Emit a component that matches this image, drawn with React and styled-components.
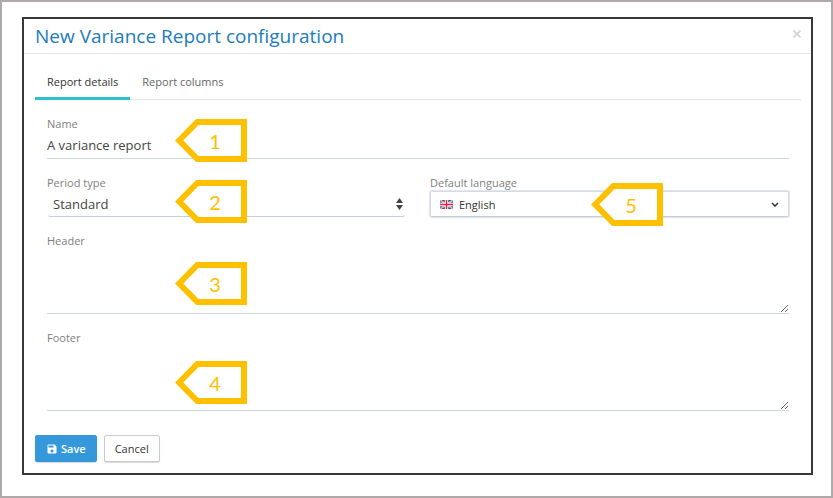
import React from 'react'
import styled, { createGlobalStyle } from 'styled-components'
import { MdSave } from 'react-icons/md'

function Callout({ number, left, top }) {
  return (
    <StyledCallout $left={left} $top={top}>
      <svg width="72" height="43" viewBox="0 0 72 43">
        <path d="M4.2 21.5 L22.3 3 H69 V40 H22.3 Z" fill="#fff" stroke="#ffc000" strokeWidth="6" />
      </svg>
      <StyledNumber>{number}</StyledNumber>
    </StyledCallout>
  )
}

function Flag() {
  return (
    <StyledFlag width="13" height="9" viewBox="0 0 26 18">
      <rect width="26" height="18" fill="#3a4a94" />
      <path d="M0 0 L26 18 M26 0 L0 18" stroke="#e9e3ef" strokeWidth="3" />
      <path d="M0 0 L26 18 M26 0 L0 18" stroke="#dc4a58" strokeWidth="1" />
      <path d="M13 0 V18 M0 9 H26" stroke="#fff" strokeWidth="7" />
      <path d="M13 0 V18 M0 9 H26" stroke="#d8283c" strokeWidth="3" />
    </StyledFlag>
  )
}

function App() {
  return (
    <>
      <GlobalStyle />
      <StyledPage>
        <StyledDialog role="dialog" aria-labelledby="title">
          <StyledHeader>
            <StyledTitle id="title">New Variance Report configuration</StyledTitle>
            <StyledClose type="button" aria-label="Close">
              <svg width="8" height="8" viewBox="0 0 8 8">
                <path d="M0.5 0.5 L7.5 7.5 M7.5 0.5 L0.5 7.5" stroke="#d2d2d2" strokeWidth="1.6" />
              </svg>
            </StyledClose>
          </StyledHeader>
          <StyledBody>
            <StyledTabs role="tablist">
              <StyledTab type="button" role="tab" aria-selected="true" $active>Report details</StyledTab>
              <StyledTab type="button" role="tab" aria-selected="false">Report columns</StyledTab>
            </StyledTabs>
            <StyledForm id="report" onSubmit={(e) => e.preventDefault()}>
              <StyledField>
                <StyledLabel htmlFor="name">Name</StyledLabel>
                <StyledInput id="name" defaultValue="A variance report" />
                <Callout number={1} left={128} top={3} />
              </StyledField>
              <StyledRow>
                <StyledField>
                  <StyledLabel htmlFor="period">Period type</StyledLabel>
                  <StyledControl>
                    <StyledSelect id="period">
                      <option>Standard</option>
                    </StyledSelect>
                    <StyledArrow width="7" height="12" viewBox="0 0 7 12" $right={3}>
                      <path d="M3.5 0 L7 5 H0 Z M0 7 H7 L3.5 12 Z" fill="#444" />
                    </StyledArrow>
                  </StyledControl>
                  <Callout number={2} left={128} top={5} />
                </StyledField>
                <StyledField>
                  <StyledLabel htmlFor="language">Default language</StyledLabel>
                  <StyledControl>
                    <StyledSelect id="language" $boxed>
                      <option>English</option>
                    </StyledSelect>
                    <Flag />
                    <StyledArrow width="8" height="5" viewBox="0 0 8 5" $right={10}>
                      <path d="M1 1 L4 4 L7 1" fill="none" stroke="#333" strokeWidth="1.5" />
                    </StyledArrow>
                  </StyledControl>
                  <Callout number={5} left={161} top={8} />
                </StyledField>
              </StyledRow>
              <StyledField>
                <StyledLabel htmlFor="header">Header</StyledLabel>
                <StyledTextarea id="header" />
                <Callout number={3} left={128} top={29} />
              </StyledField>
              <StyledField>
                <StyledLabel htmlFor="footer">Footer</StyledLabel>
                <StyledTextarea id="footer" />
                <Callout number={4} left={128} top={31} />
              </StyledField>
            </StyledForm>
            <StyledActions>
              <StyledButton type="submit" form="report" $primary>
                <MdSave size={12} />
                Save
              </StyledButton>
              <StyledButton type="button">Cancel</StyledButton>
            </StyledActions>
          </StyledBody>
        </StyledDialog>
      </StyledPage>
    </>
  )
}

const GlobalStyle = createGlobalStyle`
  * {
    box-sizing: border-box;
  }
  body {
    margin: 0;
    background: #fff;
  }
  body, button, input, select, textarea {
    font-family: "Open Sans", "Noto Sans", sans-serif;
  }
`;

const StyledPage = styled.main`
  min-height: 100vh;
  padding: 15px 18px 20px 20px;
  border: 2px solid #aeaaaa;
`;

const StyledDialog = styled.section`
  border: 2px solid #3b3838;
  background: #fff;
`;

const StyledHeader = styled.header`
  display: flex;
  justify-content: space-between;
  align-items: center;
  height: 35px;
  padding: 0 10px 0 11px;
  border-bottom: 1px solid #e5e5e5;
`;

const StyledTitle = styled.h1`
  margin: 0;
  font-size: 19px;
  font-weight: 400;
  line-height: 34px;
  color: #1c7cbc;
`;

const StyledClose = styled.button`
  display: flex;
  padding: 0 0 4px;
  border: 0;
  background: none;
  cursor: pointer;
`;

const StyledBody = styled.div`
  padding: 11px 10px 11px 11px;
`;

const StyledTabs = styled.div`
  display: flex;
  border-bottom: 1px solid #e5e5e5;
`;

const StyledTab = styled.button`
  height: 35px;
  margin-bottom: -1px;
  padding: 0 12px;
  border: 0;
  border-bottom: 3px solid ${(props) => (props.$active ? '#2fc0cd' : 'transparent')};
  background: none;
  font-size: 11px;
  color: ${(props) => (props.$active ? '#333' : '#666')};
  cursor: pointer;
`;

const StyledForm = styled.form`
  display: flex;
  flex-direction: column;
  gap: 16px;
  padding: 16px 12px 0;
`;

const StyledRow = styled.div`
  display: grid;
  grid-template-columns: 1fr 1fr;
  gap: 24px;
`;

const StyledField = styled.div`
  position: relative;
`;

const StyledLabel = styled.label`
  display: block;
  font-size: 11px;
  line-height: 16px;
  color: #808080;
`;

const StyledInput = styled.input`
  display: block;
  width: 100%;
  height: 27px;
  padding: 0;
  border: 0;
  border-bottom: 1px solid #cdd5e0;
  outline: 0;
  font-size: 13px;
  color: #444;
`;

const StyledControl = styled.div`
  position: relative;
`;

const StyledSelect = styled.select`
  display: block;
  appearance: none;
  width: 100%;
  height: 26px;
  padding: ${(props) => (props.$boxed ? '0 28px' : '0 5px')};
  border: 1px solid ${(props) => (props.$boxed ? '#d5dae4' : 'transparent')};
  border-bottom-color: #c5cddb;
  border-radius: ${(props) => (props.$boxed ? '2px' : '4px')};
  box-shadow: ${(props) => (props.$boxed ? '0 0 1px 1px #dfe3eb' : 'none')};
  background: #fff;
  outline: 0;
  font-size: ${(props) => (props.$boxed ? '11px' : '13px')};
  color: ${(props) => (props.$boxed ? '#333' : '#444')};
`;

const StyledArrow = styled.svg`
  position: absolute;
  top: 0;
  bottom: 0;
  right: ${(props) => props.$right}px;
  margin: auto 0;
  pointer-events: none;
`;

const StyledFlag = styled.svg`
  position: absolute;
  top: 0;
  bottom: 0;
  left: 10px;
  margin: auto 0;
  pointer-events: none;
`;

const StyledTextarea = styled.textarea`
  display: block;
  width: 100%;
  height: 65px;
  padding: 4px 0;
  border: 0;
  border-bottom: 1px solid #cdd5e0;
  outline: 0;
  resize: vertical;
  font-size: 13px;
  color: #444;
`;

const StyledCallout = styled.div`
  position: absolute;
  top: ${(props) => props.$top}px;
  left: ${(props) => props.$left}px;
  display: flex;
  align-items: center;
  pointer-events: none;
`;

const StyledNumber = styled.span`
  position: absolute;
  left: 10px;
  width: 60px;
  text-align: center;
  font-family: Lato, sans-serif;
  font-size: 20px;
  line-height: 24px;
  color: #ffc000;
`;

const StyledActions = styled.div`
  display: flex;
  gap: 7px;
  padding-top: 24px;
`;

const StyledButton = styled.button`
  display: flex;
  align-items: center;
  gap: 3px;
  height: 27px;
  padding: 0 10px;
  border: 1px solid ${(props) => (props.$primary ? '#3498db' : '#ccc')};
  border-radius: 2px;
  box-shadow: 0 1px 1px rgba(0, 0, 0, 0.15);
  background: ${(props) => (props.$primary ? '#3498db' : '#fff')};
  font-size: 11px;
  font-weight: ${(props) => (props.$primary ? 600 : 400)};
  color: ${(props) => (props.$primary ? '#fff' : '#333')};
  cursor: pointer;
`;

export default App
